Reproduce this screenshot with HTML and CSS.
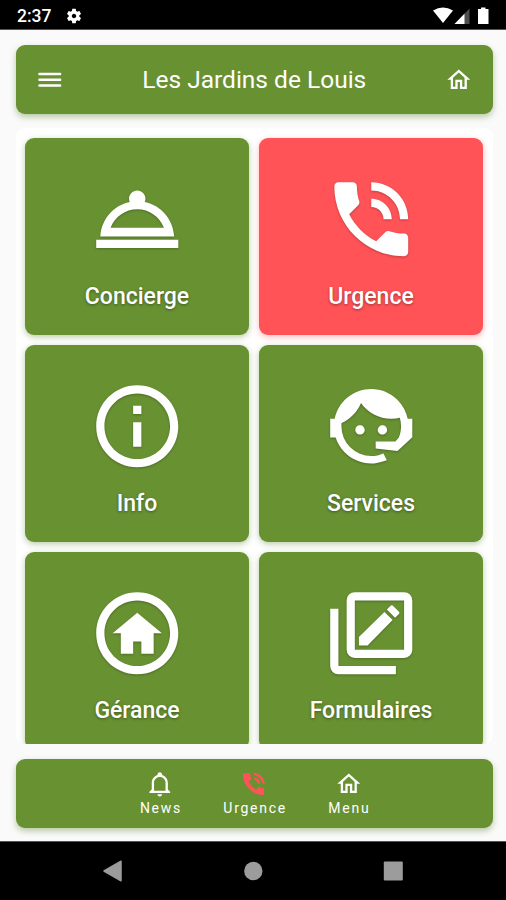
FILE: index.html
```html
<!DOCTYPE html>
<html lang="fr">
<head>
<meta charset="utf-8">
<title>Les Jardins de Louis</title>
<link rel="stylesheet" href="styles.css">
</head>
<body>
<div class="status">
  <span class="time">2:37</span>
  <svg class="gear" viewBox="0 0 24 24"><path d="M19.14 12.94c.04-.3.06-.61.06-.94 0-.32-.02-.64-.07-.94l2.03-1.58c.18-.14.23-.41.12-.61l-1.92-3.32c-.12-.22-.37-.29-.59-.22l-2.39.96c-.5-.38-1.03-.7-1.62-.94l-.36-2.54c-.04-.24-.24-.41-.48-.41h-3.84c-.24 0-.43.17-.47.41l-.36 2.54c-.59.24-1.13.57-1.62.94l-2.39-.96c-.22-.08-.47 0-.59.22L2.74 8.87c-.12.21-.08.47.12.61l2.03 1.58c-.05.3-.09.63-.09.94s.02.64.07.94l-2.03 1.58c-.18.14-.23.41-.12.61l1.92 3.32c.12.22.37.29.59.22l2.39-.96c.5.38 1.03.7 1.62.94l.36 2.54c.05.24.24.41.48.41h3.84c.24 0 .44-.17.47-.41l.36-2.54c.59-.24 1.13-.56 1.62-.94l2.39.96c.22.08.47 0 .59-.22l1.92-3.32c.12-.22.07-.47-.12-.61l-2.01-1.58zM12 15c-1.650 0-3-1.350-3-3s1.350-3 3-3 3 1.350 3 3-1.350 3-3 3z"/></svg>
  <svg class="signals" viewBox="0 0 58 18"><path d="M0 3.600Q10 -2.400 20 3.600L10 16z"/><path d="M36.500 1.500V17H21.500z" opacity=".3"/><path d="M31.500 6.700V17H21.500z"/><path d="M48 .5h4.500V2H55.500V17H45V2H48z"/></svg>
</div>
<div class="app">
  <header class="bar top">
    <svg class="icon" viewBox="0 0 24 24"><path d="M3 5.900h18a1 1 0 010 2.100H3a1 1 0 010-2.100zm0 5h18a1 1 0 010 2.100H3a1 1 0 010-2.100zm0 5h18a1 1 0 010 2.100H3a1 1 0 010-2.100z"/></svg>
    <h1>Les Jardins de Louis</h1>
    <svg class="icon" viewBox="0 0 24 24"><path d="M12 5.690L17 10.190V18H15V12H9V18H7V10.190L12 5.690M12 3L2 12H5V20H11V14H13V20H19V12H22"/></svg>
  </header>
  <main class="grid">
    <a class="card"><svg viewBox="0 0 24 24"><path d="M2 17h20v2H2zm11.840-9.210c.1-.24.16-.51.16-.79 0-1.100-.9-2-2-2s-2 .9-2 2c0 .28.06.55.16.79C6.250 8.600 3.270 11.930 3 16.200h18c-.27-4.270-3.250-7.600-7.160-8.410zM12 9.580c2.950 0 5.470 1.830 6.500 4.520h-13c1.030-2.690 3.550-4.520 6.500-4.520z"/></svg><span>Concierge</span></a>
    <a class="card red"><svg viewBox="0 0 24 24"><path d="M20 15.500c-1.250 0-2.450-.2-3.570-.57-.35-.11-.74-.03-1.020.24l-2.200 2.200c-2.830-1.440-5.150-3.750-6.590-6.590l2.200-2.210c.28-.26.36-.65.25-1C8.700 6.450 8.500 5.250 8.500 4c0-.55-.45-1-1-1H4c-.55 0-1 .45-1 1 0 9.390 7.610 17 17 17 .55 0 1-.45 1-1v-3.500c0-.55-.45-1-1-1zM19 12h2c0-4.970-4.030-9-9-9v2c3.870 0 7 3.130 7 7zm-4 0h2c0-2.760-2.240-5-5-5v2c1.660 0 3 1.340 3 3z"/></svg><span>Urgence</span></a>
    <a class="card"><svg viewBox="0 0 24 24"><path d="M11 7h2v2h-2zm0 4h2v6h-2zm1-9C6.480 2 2 6.480 2 12s4.480 10 10 10 10-4.480 10-10S17.520 2 12 2zm0 18c-4.410 0-8-3.590-8-8s3.590-8 8-8 8 3.590 8 8-3.590 8-8 8z"/></svg><span>Info</span></a>
    <a class="card"><svg viewBox="0 0 24 24"><path d="M18.720,14.760C19.070,13.910 19.260,13 19.260,12C19.260,11.280 19.150,10.590 18.960,9.950C18.310,10.100 17.630,10.180 16.920,10.180C13.860,10.180 11.150,8.670 9.500,6.340C8.610,8.500 6.910,10.260 4.770,11.220C4.730,11.470 4.730,11.740 4.730,12A7.270,7.270 0 0,0 12,19.270C13.050,19.270 14.060,19.040 14.970,18.630C15.540,19.720 15.800,20.260 15.780,20.260C14.140,20.810 12.870,21.080 12,21.080C9.580,21.080 7.270,20.130 5.570,18.420C4.530,17.380 3.760,16.110 3.330,14.730H2V10.180H3.090C3.930,6.040 7.600,2.920 12,2.920C14.400,2.920 16.710,3.870 18.420,5.580C19.690,6.840 20.540,8.450 20.890,10.180H22V14.730H21.940L18.380,18L13.080,17.400V15.730H17.910L18.720,14.760M9.270,11.770C9.570,11.770 9.860,11.890 10.070,12.110C10.280,12.320 10.400,12.610 10.400,12.910C10.400,13.210 10.280,13.500 10.070,13.710C9.860,13.920 9.570,14.040 9.270,14.040C8.640,14.040 8.130,13.540 8.130,12.910C8.130,12.280 8.640,11.770 9.270,11.770M14.720,11.770C15.350,11.770 15.850,12.280 15.850,12.910C15.850,13.540 15.350,14.040 14.720,14.040C14.090,14.040 13.580,13.540 13.580,12.910A1.140,1.140 0 0,1 14.720,11.770Z"/></svg><span>Services</span></a>
    <a class="card"><svg viewBox="0 0 24 24"><path d="M12 2C6.480 2 2 6.480 2 12s4.480 10 10 10 10-4.480 10-10S17.520 2 12 2zm0 18c-4.410 0-8-3.590-8-8s3.590-8 8-8 8 3.590 8 8-3.590 8-8 8z"/><path d="M12 7L6 12H8V17H11V14H13V17H16V12H18z"/></svg><span>Gérance</span></a>
    <a class="card"><svg viewBox="0 0 24 24"><path fill-rule="evenodd" d="M8 2H20a2 2 0 012 2V16a2 2 0 01-2 2H8a2 2 0 01-2-2V4a2 2 0 012-2zM8 4V16H20V4z"/><path d="M4 6V20H18V22H4a2 2 0 01-2-2V6zM9 12.900L15.200 6.800L17.200 8.800L11.100 15H9zM15.800 6.200L16.600 5.400Q17 5 17.400 5.400L18.700 6.700Q19.100 7.100 18.700 7.400L17.800 8.200z"/></svg><span>Formulaires</span></a>
  </main>
  <nav class="bar tabs">
    <a class="tab"><svg class="icon" viewBox="0 0 24 24"><path d="M10 21H14C14 22.100 13.100 23 12 23S10 22.100 10 21M21 19V20H3V19L5 17V11C5 7.900 7 5.200 10 4.300V4C10 2.900 10.900 2 12 2S14 2.900 14 4V4.300C17 5.200 19 7.900 19 11V17L21 19M17 11C17 8.200 14.800 6 12 6S7 8.200 7 11V18H17V11Z"/></svg><span>News</span></a>
    <a class="tab"><svg class="icon alert" viewBox="0 0 24 24"><path d="M20.200 15.900c-1.250-.1-2.400-.5-3.400-1-.4-.2-.8-.1-1.100.2l-1.700 2c-2.900-1.700-5.100-4.100-6.400-7l2-1.700c.3-.3.400-.7.200-1.100-.5-1-.8-2.200-.9-3.400 0-.6-.5-1-1-1H3.500c-.6 0-1 .5-1 1 .4 9.800 8 17.400 17.500 17.800.6 0 1-.4 1-1v-3.800c0-.5-.4-1-.8-1zM19.700 12.400l1.900-.4c-.4-5-4.300-9-9.300-9.600l-.3 1.900c4 .5 7.200 3.900 7.700 8.100zm-4-.2l1.900-.4c-.3-2.700-2.400-4.900-5.200-5.300l-.4 1.900c1.900.3 3.400 1.900 3.700 3.800z"/></svg><span>Urgence</span></a>
    <a class="tab"><svg class="icon" viewBox="0 0 24 24"><path d="M12 5.690L17 10.190V18H15V12H9V18H7V10.190L12 5.690M12 3L2 12H5V20H11V14H13V20H19V12H22"/></svg><span>Menu</span></a>
  </nav>
</div>
<div class="system">
  <svg viewBox="0 0 20 22"><path d="M18 1.200V20.800L1 11z" stroke-width="1.500" stroke-linejoin="round"/></svg>
  <svg viewBox="0 0 20 22"><circle cx="10.300" cy="11" r="9.200"/></svg>
  <svg viewBox="0 0 20 22"><rect x=".8" y="1.500" width="19" height="19" rx="1"/></svg>
</div>
</body>
</html>
```
FILE: styles.css
```css
* { box-sizing: border-box; }
body {
  margin: 0;
  width: 506px;
  height: 900px;
  overflow: hidden;
  display: flex;
  flex-direction: column;
  font-family: Roboto, "Liberation Sans", sans-serif;
  background: #fafafa;
  color: #fff;
}
svg { display: block; fill: currentColor; flex: none; }
.status {
  height: 30px;
  flex: none;
  display: flex;
  align-items: center;
  padding: 0 15px 0 17px;
  background: #000;
  border-bottom: 1px solid #555;
}
.time { font-size: 17.500px; font-weight: 500; line-height: 30px; padding-top: 3px; width: 48px; }
.gear { width: 18px; height: 18px; margin-top: 2px; }
.signals { width: 58px; height: 18px; margin: 2px 0 0 auto; }
.app { flex: 1; min-height: 0; padding: 15px 13px 0 15.500px; display: flex; flex-direction: column; }
.bar {
  height: 69px;
  flex: none;
  background: #689132;
  border-radius: 9px;
  box-shadow: 0 3px 6px rgba(80, 125, 35, .4);
}
.icon { width: 27.600px; height: 27.600px; }
.top { display: flex; align-items: center; justify-content: space-between; padding: 0 20.500px; }
h1 { margin: 0; font-size: 24.500px; font-weight: 400; line-height: 30px; }
.grid {
  margin-top: 14px;
  height: 616px;
  flex: none;
  overflow: hidden;
  border-radius: 9px;
  background: #fff;
  padding: 10px 10px 0 9.500px;
  display: grid;
  grid-template-columns: 1fr 1fr;
  grid-auto-rows: 197px;
  gap: 10px;
}
.card {
  border-radius: 9px;
  background: #689132;
  box-shadow: 0 2px 6px rgba(80, 125, 35, .4);
  display: flex;
  flex-direction: column;
  align-items: center;
  padding-top: 31.600px;
}
.card svg { width: 98.500px; height: 98.500px; filter: drop-shadow(0 1px 1px rgba(0, 0, 0, .25)); }
.card span { margin-top: 13.900px; font-size: 23px; font-weight: 500; line-height: 30px; text-shadow: 0 1px 3px rgba(0, 0, 0, .4); }
.card.red { background: #ff5357; box-shadow: 0 2px 6px rgba(255, 83, 87, .4); }
.tabs { margin-top: 15px; display: flex; justify-content: center; gap: 43px; padding-top: 11px; }
.tab { display: flex; flex-direction: column; align-items: center; }
.tab span { font-size: 14px; letter-spacing: 1.750px; line-height: 18px; margin: 1px -1.750px 0 0; }
.alert { color: #ff5357; }
.system {
  height: 59px;
  flex: none;
  background: #000;
  border-top: 1px solid #555;
  color: #9c9c9c;
  display: flex;
  justify-content: center;
  align-items: center;
  gap: 120px;
}
.system svg { width: 20px; height: 22px; stroke: currentColor; stroke-width: 0; }
```
